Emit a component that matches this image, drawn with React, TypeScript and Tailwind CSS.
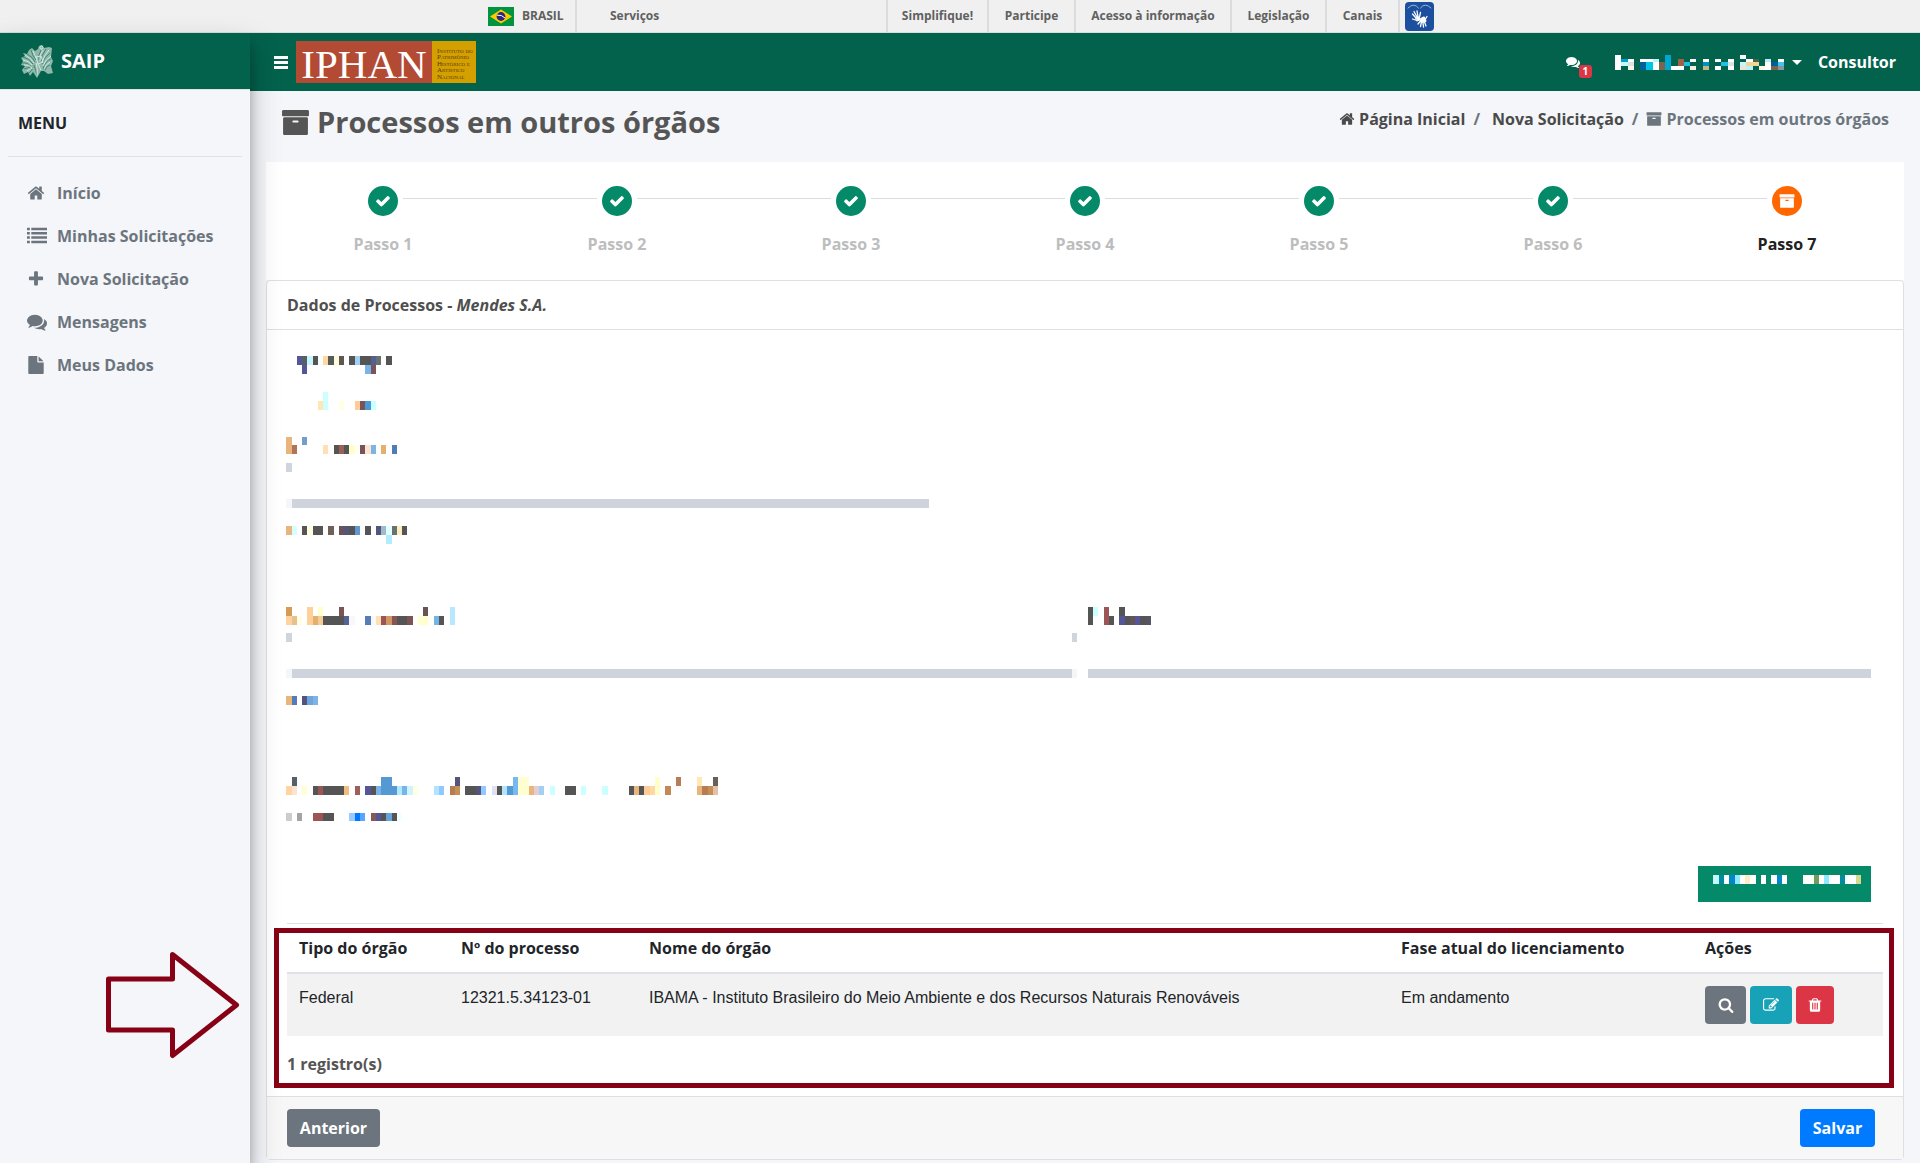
import type { ReactNode } from 'react';

const ICONS = {
  search:
    'M1216 832q0-185-131.5-316.5t-316.5-131.5-316.5 131.5-131.5 316.5 131.5 316.5 316.5 131.5 316.5-131.5 131.5-316.5zm512 832q0 52-38 90t-90 38q-54 0-90-38l-343-342q-179 124-399 124-143 0-273.5-55.5t-225-150-150-225-55.5-273.5 55.5-273.5 150-225 225-150 273.5-55.5 273.5 55.5 225 150 150 225 55.5 273.5q0 220-124 399l343 343q37 37 37 90z',
  home:
    'M1472 992v480q0 26-19 45t-45 19h-384v-384h-256v384h-384q-26 0-45-19t-19-45v-480q0-1 .5-3t.5-3l575-474 575 474q1 2 1 6zm223-69l-62 74q-8 9-21 11h-3q-13 0-21-7l-692-577-692 577q-12 8-24 7-13-2-21-11l-62-74q-8-10-7-23.5t11-21.5l719-599q32-26 76-26t76 26l244 204v-195q0-14 9-23t23-9h192q14 0 23 9t9 23v408l219 182q10 8 11 21.5t-7 23.5z',
  check:
    'M1671 566q0 40-28 68l-724 724-136 136q-28 28-68 28t-68-28l-136-136-362-362q-28-28-28-68t28-68l136-136q28-28 68-28t68 28l294 295 656-657q28-28 68-28t68 28l136 136q28 28 28 68z',
  plus:
    'M1600 736v192q0 40-28 68t-68 28h-416v416q0 40-28 68t-68 28h-192q-40 0-68-28t-28-68v-416h-416q-40 0-68-28t-28-68v-192q0-40 28-68t68-28h416v-416q0-40 28-68t68-28h192q40 0 68 28t28 68v416h416q40 0 68 28t28 68z',
  comments:
    'M1408 768q0 139-94 257t-256.5 186.5-353.5 68.5q-86 0-176-16-124 88-278 128-36 9-86 16h-3q-11 0-20.5-8t-11.5-21q-1-3-1-6.5t.5-6.5 2-6l2.5-5 3.5-5.5 4-5 4.5-5 4-4.5q5-6 23-25t26-29.5 22.5-29 25-38.5 20.5-44q-124-72-195-177t-71-224q0-139 94-257t256.5-186.5 353.5-68.5 353.5 68.5 256.5 186.5 94 257zm384 256q0 120-71 224.5t-195 176.5q10 24 20.5 44t25 38.5 22.5 29 26 29.5 23 25q1 1 4 4.5t4.5 5 4 5 3.5 5.5l2.5 5 2 6 .5 6.5-1 6.5q-3 14-13 22t-22 7q-50-7-86-16-154-40-278-128-90 16-176 16-271 0-472-132 58 4 88 4 161 0 309-45t264-129q125-92 192-212t67-254q0-77-23-152 129 71 204 178t75 230z',
  file:
    'M1152 512v-472q22 14 36 28l408 408q14 14 28 36h-472zm-128 32q0 40 28 68t68 28h544v1056q0 40-28 68t-68 28h-1344q-40 0-68-28t-28-68v-1600q0-40 28-68t68-28h800v544z',
  list:
    'M0 160h256v224h-256zM384 160h1408v224h-1408zM0 544h256v224h-256zM384 544h1408v224h-1408zM0 928h256v224h-256zM384 928h1408v224h-1408zM0 1312h256v224h-256zM384 1312h1408v224h-1408z',
  archive:
    'M1088 832q0-26-19-45t-45-19h-256q-26 0-45 19t-19 45 19 45 45 19h256q26 0 45-19t19-45zm576-192v960q0 26-19 45t-45 19h-1408q-26 0-45-19t-19-45v-960q0-26 19-45t45-19h1408q26 0 45 19t19 45zm64-448v256q0 26-19 45t-45 19h-1536q-26 0-45-19t-19-45v-256q0-26 19-45t45-19h1536q26 0 45 19t19 45z',
  trash:
    'M704 1376v-704q0-14-9-23t-23-9h-64q-14 0-23 9t-9 23v704q0 14 9 23t23 9h64q14 0 23-9t9-23zm256 0v-704q0-14-9-23t-23-9h-64q-14 0-23 9t-9 23v704q0 14 9 23t23 9h64q14 0 23-9t9-23zm256 0v-704q0-14-9-23t-23-9h-64q-14 0-23 9t-9 23v704q0 14 9 23t23 9h64q14 0 23-9t9-23zm-544-992h448l-48-117q-7-9-17-11h-317q-10 2-17 11zm928 32v64q0 14-9 23t-23 9h-96v948q0 83-47 143.5t-113 60.5h-832q-66 0-113-58.5t-47-141.5v-952h-96q-14 0-23-9t-9-23v-64q0-14 9-23t23-9h309l70-167q15-37 54-63t79-26h320q40 0 79 26t54 63l70 167h309q14 0 23 9t9 23z',
  edit:
    'M888 1184l116-116-152-152-116 116v56h96v96h56zm440-720q-16-16-33 1l-350 350q-17 17-1 33t33-1l350-350q17-17 1-33zm80 594v190q0 119-84.5 203.5t-203.5 84.5h-832q-119 0-203.5-84.5t-84.5-203.5v-832q0-119 84.5-203.5t203.5-84.5h832q63 0 117 25 15 7 18 23 3 17-9 29l-49 49q-14 14-32 8-23-6-45-6h-832q-66 0-113 47t-47 113v832q0 66 47 113t113 47h832q66 0 113-47t47-113v-126q0-13 9-22l64-64q15-15 35-7t20 29zm-96-738l288 288-672 672h-288v-288zm444 132l-92 92-288-288 92-92q28-28 68-28t68 28l152 152q28 28 28 68t-28 68z',
};

type IconName = keyof typeof ICONS;

function Icon({ name, className }: { name: IconName; className: string }) {
  return (
    <svg viewBox="0 0 1792 1792" fill="currentColor" aria-hidden="true" className={className}>
      <path d={ICONS[name]} />
    </svg>
  );
}

/* A strip of coloured blocks that hides private text. Units are thirds of a pixel. */
type Block = [x: number, y: number, w: number, h: number, fill: string];

function Mosaic({ box, blocks }: { box: [number, number, number, number]; blocks: Block[] }) {
  return (
    <svg
      viewBox={box.join(' ')}
      width={Math.round(box[2] / 3)}
      height={Math.round(box[3] / 3)}
      shapeRendering="crispEdges"
      aria-hidden="true"
      className="block shrink-0"
    >
      {blocks.map(([x, y, w, h, fill], i) => (
        <rect key={i} x={x} y={y} width={w} height={h} fill={fill} />
      ))}
    </svg>
  );
}

const D = '#555555';

const USER_NAME: Block[] = [
  [45, 75, 18, 45, '#fff'], [63, 87, 21, 9, '#00a0cc'], [63, 96, 21, 12, '#c4f6ff'], [84, 87, 18, 9, '#fff'], [84, 96, 18, 12, '#d6e4e4'], [84, 108, 18, 12, '#f8f4e8'],
  [120, 87, 39, 9, '#fff'], [120, 96, 18, 24, '#00609c'], [138, 96, 21, 24, '#00c4e4'], [159, 87, 18, 9, '#c0f0fa'], [159, 96, 18, 24, '#fff'], [177, 96, 18, 24, '#7a6450'],
  [195, 75, 18, 45, '#00a8d0'], [213, 108, 39, 12, '#fff'], [234, 87, 18, 21, '#a06048'], [252, 96, 18, 12, '#20c0e0'], [270, 87, 18, 9, '#fff'], [270, 108, 18, 12, '#f0f0e0'],
  [309, 87, 18, 9, '#fff'], [309, 96, 18, 12, '#0090c8'], [309, 108, 18, 12, '#c4b880'],
  [345, 87, 18, 9, '#fff'], [345, 108, 18, 12, '#fff'], [363, 96, 21, 12, '#20c0e0'], [384, 87, 18, 9, '#fff'], [384, 96, 18, 12, '#d6e4e4'], [384, 108, 18, 12, '#fff'],
  [420, 75, 18, 12, '#fff'], [438, 87, 21, 9, '#fff'], [459, 87, 18, 9, '#4c6444'], [420, 96, 18, 12, '#c4f6ff'], [438, 96, 39, 12, '#f0d498'], [420, 108, 18, 12, '#f0e4cc'], [438, 108, 21, 12, '#c0ecf4'],
  [477, 108, 18, 12, '#fff8e8'], [495, 87, 18, 9, '#c0e8fa'], [495, 96, 18, 24, '#fff'], [513, 96, 21, 12, '#00609c'], [513, 108, 21, 12, '#7a6450'], [534, 87, 18, 9, '#fff'], [534, 96, 18, 12, '#40c8e8'], [534, 108, 18, 12, '#8c94a0'],
];

const FIELD_A: Block[] = [
  [111, 48, 15, 27, '#555599'], [126, 48, 15, 27, '#556060'], [141, 48, 18, 27, '#c8f4ff'], [159, 48, 15, 27, D], [174, 48, 15, 27, '#f8ffff'], [189, 48, 15, 27, '#ffd8a0'], [204, 48, 18, 27, '#555c58'], [222, 48, 15, 27, '#fffcdc'], [237, 48, 15, 27, '#605850'],
  [267, 48, 18, 27, D], [285, 48, 15, 27, '#a0d0f4'], [300, 48, 33, 27, D], [333, 48, 15, 27, '#556090'], [348, 48, 15, 27, '#687070'], [378, 48, 18, 27, D],
  [126, 75, 15, 27, '#555599'], [315, 75, 18, 27, '#78b4ea'], [333, 75, 15, 27, '#7c5458'],
];
const FIELD_B: Block[] = [
  [189, 156, 15, 54, '#ccffff'], [174, 183, 15, 27, '#ffe6b4'], [237, 183, 15, 27, '#ffffe4'], [285, 183, 15, 27, '#ffcc98'], [300, 183, 15, 27, '#785458'], [315, 183, 18, 27, '#4c98d4'], [333, 183, 15, 27, '#ccffff'],
];
const FIELD_C: Block[] = [
  [78, 291, 18, 51, '#e8b67c'], [96, 315, 15, 27, '#b07458'], [126, 291, 15, 24, '#749ccc'], [189, 315, 15, 27, '#ffe0b4'], [222, 315, 15, 27, D], [237, 315, 15, 27, '#9c6058'], [252, 315, 15, 27, D], [267, 315, 18, 27, '#ffffcc'], [285, 315, 15, 27, '#fffff4'],
  [300, 315, 15, 27, '#785458'], [315, 315, 18, 27, '#fce4d0'], [333, 315, 15, 27, '#7cb4e8'], [363, 315, 15, 27, '#e4b070'], [396, 315, 15, 27, '#507cb8'],
];
const FIELD_E: Block[] = [
  [78, 558, 18, 27, '#e8b67c'], [96, 558, 15, 27, '#d8ffff'], [126, 558, 15, 27, D], [141, 558, 18, 27, '#ffffe4'], [159, 558, 30, 27, D], [204, 558, 18, 27, '#706058'], [237, 558, 15, 27, '#685458'], [252, 558, 15, 27, '#55557c'], [267, 558, 18, 27, D], [285, 558, 15, 27, '#6098d4'],
  [315, 558, 18, 27, D], [348, 558, 15, 27, '#55557c'], [363, 558, 15, 27, '#9cbccc'], [378, 558, 18, 27, '#e4ffff'], [396, 558, 15, 27, '#687070'], [411, 558, 15, 27, '#ffecc0'], [426, 558, 15, 27, D], [378, 585, 18, 27, '#b4ecff'],
];
const FIELD_F: Block[] = [
  [78, 51, 18, 27, '#d49c54'], [78, 78, 18, 27, '#ffd4a0'], [96, 78, 15, 27, '#e8c090'], [111, 78, 15, 27, '#ffffe4'], [141, 51, 18, 54, '#ffd098'], [174, 51, 15, 27, '#ffffcc'], [159, 78, 15, 27, '#e4b070'], [174, 78, 15, 27, '#f4cc94'], [189, 78, 63, 27, D], [237, 51, 15, 27, '#7c5458'], [252, 78, 15, 27, '#556498'], [267, 78, 18, 27, '#f8f8fc'],
  [315, 78, 18, 27, '#587cb8'], [333, 78, 15, 27, '#f8f8ff'], [348, 78, 15, 27, '#ffe0b0'], [363, 78, 15, 27, '#9c5458'], [378, 78, 18, 27, '#d09860'], [396, 78, 15, 27, '#885458'], [411, 78, 30, 27, D], [441, 78, 18, 27, '#7c5458'], [474, 78, 30, 27, '#ffffd0'], [489, 51, 15, 27, '#685454'], [504, 78, 18, 27, '#fffff8'], [522, 78, 15, 27, '#70b4e8'], [537, 78, 15, 27, D], [570, 51, 15, 54, '#b8e8ff'],
];
const FIELD_F2: Block[] = [
  [141, 51, 15, 54, D], [156, 51, 15, 27, '#ccffff'], [189, 51, 15, 54, '#9c5454'], [204, 78, 15, 27, D], [234, 51, 18, 27, D], [234, 78, 18, 27, '#555599'], [252, 78, 15, 27, D], [267, 78, 15, 27, '#645454'], [282, 78, 15, 27, '#555599'], [297, 78, 18, 27, D], [315, 78, 15, 27, '#555564'],
];
const FIELD_G: Block[] = [
  [78, 318, 18, 27, '#e8b67c'], [96, 318, 15, 27, '#547ab8'], [126, 318, 15, 27, '#55557c'], [141, 318, 18, 27, '#70a4dc'], [159, 318, 15, 27, '#7cb4e8'],
];
const FIELD_H: Block[] = [
  [96, 561, 15, 27, '#556068'], [78, 588, 18, 27, '#ffd4a0'], [96, 588, 15, 27, '#fce4d0'], [126, 588, 15, 27, '#ffffd4'], [159, 588, 15, 27, D], [174, 588, 15, 27, '#9c5454'], [189, 588, 63, 27, D], [252, 588, 15, 27, '#f0bc80'], [285, 588, 15, 27, '#9c6058'], [315, 588, 18, 27, '#555599'], [333, 588, 15, 27, D], [348, 588, 15, 27, '#78b4e8'],
  [363, 561, 33, 54, '#5499d4'], [396, 588, 15, 27, '#5499d4'], [411, 588, 15, 27, '#b4e8ff'], [426, 588, 15, 27, '#78b4e8'], [441, 588, 18, 27, '#d0f4ff'], [459, 588, 15, 27, '#ffffe4'], [522, 588, 15, 27, '#b0e4ff'], [537, 588, 15, 27, '#90c8ff'], [570, 588, 15, 27, '#b87c54'], [585, 561, 15, 27, '#55557c'], [585, 588, 15, 27, '#c49058'],
  [615, 588, 33, 27, D], [648, 588, 15, 27, '#55557c'], [663, 588, 15, 27, '#90c8ff'], [696, 588, 15, 27, '#e0e0f4'], [711, 588, 15, 27, D], [726, 588, 15, 27, '#b0e4ff'], [741, 588, 18, 27, '#5499d4'], [759, 561, 15, 54, '#78b8f0'], [774, 561, 33, 54, '#ffffd0'], [807, 588, 15, 27, '#e8b67c'], [822, 588, 15, 27, '#e4ccd0'], [837, 588, 15, 27, '#a0d0f4'], [870, 588, 15, 27, '#ccffff'],
  [915, 588, 33, 27, D], [963, 588, 15, 27, '#ccffff'], [1026, 588, 18, 27, '#ccffff'], [1107, 588, 15, 27, D], [1122, 588, 15, 27, '#e8b67c'], [1137, 588, 15, 27, D], [1152, 588, 18, 27, '#ffcc98'], [1170, 588, 15, 27, '#ffd8a4'], [1185, 561, 15, 54, '#ffffcc'], [1215, 588, 18, 27, '#c48854'], [1248, 561, 15, 27, '#b87c58'],
  [1311, 561, 15, 27, '#ffe8b4'], [1311, 588, 15, 27, '#e8b67c'], [1326, 588, 18, 27, '#b87c54'], [1344, 588, 15, 27, '#c49058'], [1359, 561, 15, 27, '#686058'], [1359, 588, 15, 27, '#e4c0a8'],
];
const FIELD_I: Block[] = [
  [78, 669, 18, 24, '#cccccc'], [111, 669, 15, 24, '#a4a4a4'], [159, 669, 30, 24, '#9c5454'], [189, 669, 33, 24, D], [267, 669, 18, 24, '#98ccff'], [285, 669, 15, 24, '#0078ff'], [300, 669, 15, 24, '#58a4ff'],
  [333, 669, 15, 24, '#885858'], [348, 669, 15, 24, '#555599'], [363, 669, 15, 24, D], [378, 669, 18, 24, '#64a4dc'], [396, 669, 15, 24, D], [411, 669, 15, 24, '#f0ffff'],
];
const ADD_LABEL: Block[] = [
  [459, 105, 18, 27, '#c4f8ff'], [477, 105, 15, 27, '#008ca0'], [492, 105, 15, 27, '#fff'], [507, 105, 18, 27, '#0088c8'], [525, 105, 15, 27, '#90e8ff'], [540, 105, 15, 27, '#fff'], [555, 105, 15, 27, '#ffecc4'], [570, 105, 18, 27, '#fff'], [603, 105, 15, 27, '#fff'], [633, 105, 18, 27, '#fff'], [651, 105, 15, 27, '#0088c8'], [666, 105, 15, 27, '#fff'],
  [729, 105, 33, 27, '#fffffa'], [762, 105, 15, 27, '#709c60'], [777, 105, 15, 27, '#fff'], [792, 105, 15, 27, '#90e8ff'], [807, 105, 33, 27, '#fff'], [840, 105, 15, 27, '#008ca0'], [855, 105, 33, 27, '#fff'], [888, 105, 15, 27, '#d4d890'],
];

function GovLink({ className, children }: { className: string; children: ReactNode }) {
  return (
    <a href="#" className={`flex h-full items-center justify-center ${className}`}>
      {children}
    </a>
  );
}

function GovBar() {
  return (
    <div className="h-[33px] border-b border-[#dcdcdc] bg-[#f0f0f0] text-xs font-bold text-[#606060]">
      <div className="mx-auto flex h-8 w-[948px] max-w-full items-center pl-[2px]">
        <a href="#" className="flex h-full w-[89px] shrink-0 items-center gap-2 border-r-2 border-[#dcdcdc]">
          <svg viewBox="0 0 26 19" className="h-[19px] w-[26px]" aria-hidden="true">
            <rect width="26" height="19" fill="#009440" />
            <path d="M13 2.5 24 9.5 13 16.5 2 9.5z" fill="#ffcb00" />
            <circle cx="13" cy="9.5" r="4.4" fill="#302681" />
            <path d="M9 8.2q4.500-.8 8 2.800" stroke="#fff" strokeWidth="1" fill="none" />
          </svg>
          BRASIL
        </a>
        <GovLink className="ml-[33px]">Serviços</GovLink>
        <nav className="ml-auto flex h-full">
          <GovLink className="w-[101px] border-l-2 border-[#dcdcdc]">Simplifique!</GovLink>
          <GovLink className="w-[87px] border-l-2 border-[#dcdcdc]">Participe</GovLink>
          <GovLink className="w-[156px] border-l-2 border-[#dcdcdc]">Acesso à informação</GovLink>
          <GovLink className="w-[95px] border-l-2 border-[#dcdcdc]">Legislação</GovLink>
          <GovLink className="w-[75px] border-x-2 border-[#dcdcdc]">Canais</GovLink>
        </nav>
        <button type="button" aria-label="VLibras" className="ml-[5px] h-[29px] w-[29px] shrink-0 rounded bg-[#1c4f9e]">
          <svg viewBox="0 0 29 29" className="h-[29px] w-[29px]" fill="none" stroke="#fff" strokeLinecap="round" strokeLinejoin="round" aria-hidden="true">
            <path d="M3 6Q9 0 13.500 6M15.500 6Q20 0 26 6" stroke="#9fb6da" strokeWidth="1" />
            <path d="M11 16 7.500 12M12 15 9 9.500M13 14.500 12 9M14.500 15 15.500 10.500M10.500 18 7.500 17" strokeWidth="1.300" />
            <path d="M11 16 14 15 15 18 12 19z" fill="#fff" strokeWidth="1" />
            <path d="M16 17 19 15.500 20.500 19 16.500 20z" fill="#fff" strokeWidth="2" />
            <path d="M15.500 19 13 22M16.500 20 15.500 24.500M18 20.500 18.500 25M19.500 20 21 24M20.500 17 22 14.500" strokeWidth="1.300" />
          </svg>
        </button>
      </div>
    </div>
  );
}

const MENU: { icon: IconName; label: string }[] = [
  { icon: 'home', label: 'Início' },
  { icon: 'list', label: 'Minhas Solicitações' },
  { icon: 'plus', label: 'Nova Solicitação' },
  { icon: 'comments', label: 'Mensagens' },
  { icon: 'file', label: 'Meus Dados' },
];

function Emblem() {
  return (
    <svg viewBox="0 0 32 33" className="h-[33px] w-8" aria-hidden="true">
      <path
        d="M8 5 11 3 14 6 17 4 18 1 21 0 23 3 28 2 31 3 30 12 32 16 30 21 32 28 27 29 23 26 20 26 16 33 12 27 9 31 7 27 3 29 1 25 4 21 0 20 2 16 0 13 4 11 2 8 6 9z"
        fill="#8db8aa"
      />
      <g fill="none" stroke="#2c7a66" strokeWidth="0.800">
        <path d="M2 12q6 1 10 7M1 18q6-1 9 4M3 24q5-3 9 0M6 9q6 3 8 8M10 5q2 7 5 10M20 5q-3 5-2 10M25 4q-5 7-5 12M29 8q-6 4-8 11M30 14q-6 2-8 10M29 20q-4 1-5 5M13 20q2 5 3 11M8 28q3-2 4-6" />
      </g>
      <g fill="none" stroke="#dcebe6" strokeWidth="0.900">
        <path d="M4 10q6 3 9 8M2 15q6 1 9 5M3 20q5-1 8 3M12 6q2 5 4 8M22 5q-4 5-3 11M28 5q-5 5-7 13M30 11q-5 3-8 10M29 17q-4 2-6 7M15 18q2 6 1 13M6 26q4-3 6-3" />
        <circle cx="20.500" cy="2.500" r="1.500" />
        <path d="m15 12 5-1 2 6-5 2zM17 19l3 6" />
      </g>
    </svg>
  );
}

function Sidebar() {
  return (
    <aside className="z-10 flex w-[250px] shrink-0 flex-col bg-[#f4f6fa] shadow-[0_14px_28px_rgba(0,0,0,0.25),0_10px_10px_rgba(0,0,0,0.22)]">
      <a href="#" className="flex h-[57px] items-center gap-2 border-b border-[#dee2e6] bg-[#03624c] pl-[21px] text-xl font-bold text-white">
        <Emblem />
        SAIP
      </a>
      <div className="mx-2 flex h-[67px] items-center border-b border-[#dee2e6] pl-[10px] text-base font-bold text-[#212529]">
        MENU
      </div>
      <nav className="mt-[14px] flex flex-col">
        {MENU.map(({ icon, label }) => (
          <a key={label} href="#" className="flex h-[43px] items-center gap-2 pl-[27px] text-base font-bold text-[#6c757d]">
            <span className="flex w-[22px] justify-start">
              <Icon name={icon} className={icon === 'list' || icon === 'comments' ? 'h-5 w-5' : 'h-[18px] w-[18px]'} />
            </span>
            {label}
          </a>
        ))}
      </nav>
    </aside>
  );
}

function Navbar() {
  return (
    <header className="flex h-[58px] items-center bg-[#03624c] pr-6 pl-6 text-base font-bold text-white">
      <button type="button" aria-label="Alternar menu" className="flex w-[14px] flex-col gap-[2px]">
        <span className="h-[3px] bg-white" />
        <span className="h-[3px] bg-white" />
        <span className="h-[3px] bg-white" />
      </button>
      <svg viewBox="0 0 180 42" className="ml-2 h-[42px] w-[180px] overflow-visible" role="img" aria-label="IPHAN">
        <rect width="136" height="42" fill="#b34a33" />
        <rect x="136" width="44" height="42" fill="#d4a000" />
        <text x="68" y="37" textAnchor="middle" fontSize="41" fontWeight="400" fill="#fff" fontFamily="'Liberation Serif', serif">IPHAN</text>
        <g fontSize="7" fontWeight="400" fill="#5a3a10" fontFamily="'Liberation Serif', serif" style={{ fontVariant: 'small-caps' }}>
          <text x="141" y="12">Instituto do</text>
          <text x="141" y="18">Patrimônio</text>
          <text x="141" y="25">Histórico e</text>
          <text x="141" y="31">Artístico</text>
          <text x="141" y="38">Nacional</text>
        </g>
      </svg>
      <div className="ml-auto flex items-center">
        <a href="#" aria-label="Mensagens: 1" className="relative mr-[35px]">
          <Icon name="comments" className="h-[14px] w-[14px]" />
          <span className="absolute top-[10px] left-[13px] flex h-[13px] w-[13px] items-center justify-center rounded-[3px] bg-[#dc3545] text-[10px]">1</span>
        </a>
        <button type="button" aria-label="Conta do usuário" className="flex items-center gap-2">
          <Mosaic box={[45, 75, 507, 45]} blocks={USER_NAME} />
          <span className="border-x-[5px] border-t-[5px] border-x-transparent border-t-white" />
        </button>
        <span className="ml-4">Consultor</span>
      </div>
    </header>
  );
}

function TitleBar() {
  return (
    <div className="flex h-[71px] items-start justify-between px-[15px]">
      <h1 className="mt-[10px] flex items-center gap-[7px] text-[29px] leading-[42px] font-bold text-[#555]">
        <Icon name="archive" className="h-[29px] w-[29px]" />
        Processos em outros órgãos
      </h1>
      <nav aria-label="Trilha" className="mt-4 flex items-center text-base font-bold text-[#6c757d]">
        <a href="#" className="flex items-center gap-1 text-[#4a4a4a]">
          <Icon name="home" className="h-4 w-4" />
          Página Inicial
        </a>
        <span className="ml-2">/</span>
        <a href="#" className="ml-3 text-[#4a4a4a]">Nova Solicitação</a>
        <span className="mx-2">/</span>
        <span className="flex items-center gap-1">
          <Icon name="archive" className="h-4 w-4" />
          Processos em outros órgãos
        </span>
      </nav>
    </div>
  );
}

const STEPS = [1, 2, 3, 4, 5, 6, 7];

function Stepper() {
  return (
    <ol className="flex h-[118px] bg-white pt-6 text-base font-bold">
      {STEPS.map((n) => {
        const active = n === 7;
        return (
          <li key={n} className="flex flex-1 flex-col">
            <div className="flex items-center gap-[5px]">
              <span className={`mb-[5px] h-px flex-1 ${n === 1 ? '' : 'bg-[#dcdcdc]'}`} />
              <span className={`flex h-[30px] w-[30px] items-center justify-center rounded-full text-white ${active ? 'bg-[#ff6600]' : 'bg-[#048a68]'}`}>
                <Icon name={active ? 'archive' : 'check'} className="h-4 w-4" />
              </span>
              <span className={`mb-[5px] h-px flex-1 ${active ? '' : 'bg-[#dcdcdc]'}`} />
            </div>
            <span className={`mt-4 text-center ${active ? 'text-[#212121]' : 'text-[#bdbdbd]'}`}>Passo {n}</span>
          </li>
        );
      })}
    </ol>
  );
}

/* Concealed form: every field is reduced to blocks and the tinted edge of its input. */
function ConcealedForm() {
  return (
    <section aria-label="Formulário" className="flex flex-col pt-[26px] pr-8 pl-[19px]">
      <div className="pl-[11px]">
        <Mosaic box={[111, 48, 285, 54]} blocks={FIELD_A} />
      </div>
      <div className="mt-[18px] pl-8">
        <Mosaic box={[174, 156, 174, 54]} blocks={FIELD_B} />
      </div>
      <div className="mt-[27px]">
        <Mosaic box={[78, 291, 333, 51]} blocks={FIELD_C} />
      </div>
      <div className="mt-[9px] h-[9px] w-[6px] bg-[#d0d4dc]" />
      <div className="mt-[27px] h-[9px] w-[643px] max-w-full border-l-[6px] border-[#f4f6f9] bg-[#cfd3dc]" />
      <div className="mt-[18px]">
        <Mosaic box={[78, 558, 363, 54]} blocks={FIELD_E} />
      </div>
      <div className="mt-[63px] grid grid-cols-[100fr_99fr] gap-[11px]">
        <div>
          <Mosaic box={[78, 51, 507, 54]} blocks={FIELD_F} />
          <div className="mt-2 flex h-[9px] justify-between">
            <span className="w-[6px] bg-[#d0d4dc]" />
            <span className="w-[5px] bg-[#d0d4dc]" />
          </div>
          <div className="mt-[27px] h-[9px] border-r-[5px] border-l-[6px] border-[#f4f6f9] bg-[#cfd3dc]" />
        </div>
        <div>
          <Mosaic box={[141, 51, 189, 54]} blocks={FIELD_F2} />
          <div className="mt-11 h-[9px] bg-[#cfd3dc]" />
        </div>
      </div>
      <div className="mt-[18px]">
        <Mosaic box={[78, 318, 96, 27]} blocks={FIELD_G} />
      </div>
      <div className="mt-[72px]">
        <Mosaic box={[78, 561, 1296, 54]} blocks={FIELD_H} />
      </div>
      <div className="mt-[18px]">
        <Mosaic box={[78, 669, 348, 24]} blocks={FIELD_I} />
      </div>
      <button type="button" aria-label="Adicionar processo" className="mt-[45px] flex h-9 w-[173px] items-start self-end bg-[#048a68] pt-[9px] pl-[15px]">
        <Mosaic box={[459, 105, 444, 27]} blocks={ADD_LABEL} />
      </button>
    </section>
  );
}

function ProcessTable() {
  return (
    <div className="relative mx-5 mt-[21px]">
      <table className="w-full table-fixed border-t border-[#dee2e6] text-left text-base text-[#212529]">
        <colgroup>
          <col className="w-[162px]" />
          <col className="w-[188px]" />
          <col />
          <col className="w-[304px]" />
          <col className="w-[190px]" />
        </colgroup>
        <thead>
          <tr className="h-[49px] border-b-2 border-[#dee2e6]">
            <th className="px-3 font-bold">Tipo do órgão</th>
            <th className="px-3 font-bold">Nº do processo</th>
            <th className="px-3 font-bold">Nome do órgão</th>
            <th className="px-3 font-bold">Fase atual do licenciamento</th>
            <th className="px-3 font-bold">Ações</th>
          </tr>
        </thead>
        <tbody>
          <tr className="h-[63px] bg-[#f2f2f2] align-top font-['Liberation_Sans',Arial,sans-serif]">
            <td className="px-3 pt-3">Federal</td>
            <td className="px-3 pt-3">12321.5.34123-01</td>
            <td className="px-3 pt-3">IBAMA - Instituto Brasileiro do Meio Ambiente e dos Recursos Naturais Renováveis</td>
            <td className="px-3 pt-3">Em andamento</td>
            <td className="px-3 pt-3">
              <div className="flex gap-1 text-white">
                <button type="button" aria-label="Visualizar" className="flex h-[38px] w-[41px] items-center justify-center rounded bg-[#6c757d]">
                  <Icon name="search" className="h-4 w-4" />
                </button>
                <button type="button" aria-label="Editar" className="flex h-[38px] w-[42px] items-center justify-center rounded bg-[#17a2b8]">
                  <Icon name="edit" className="h-4 w-4" />
                </button>
                <button type="button" aria-label="Excluir" className="flex h-[38px] w-[38px] items-center justify-center rounded bg-[#dc3545]">
                  <Icon name="trash" className="h-4 w-4" />
                </button>
              </div>
            </td>
          </tr>
        </tbody>
      </table>
      <p className="mt-4 mb-5 text-base font-bold text-[#555]">1 registro(s)</p>

      <div className="pointer-events-none absolute top-[5px] -right-[11px] -bottom-[12px] -left-[13px] border-[5px] border-[#880015]" />
      <svg viewBox="0 0 134 108" className="pointer-events-none absolute top-[28px] right-full z-20 mr-[47px] h-[108px] w-[134px]" aria-hidden="true">
        <path d="M2.500 28H66.500V3.500L130.500 54 66.500 104.500V79H2.500z" fill="none" stroke="#880015" strokeWidth="5" strokeLinejoin="round" />
      </svg>
    </div>
  );
}

export default function App() {
  return (
    <div className="flex min-h-screen flex-col bg-[#f4f6fa] font-['Open_Sans',sans-serif]">
      <GovBar />
      <div className="flex flex-1">
        <Sidebar />
        <div className="flex min-w-0 flex-1 flex-col">
          <Navbar />
          <main className="px-4 pb-1">
            <TitleBar />
            <Stepper />
            <section className="rounded border border-[#dfdfdf] bg-white">
              <h2 className="flex h-[49px] items-center border-b border-[#dfdfdf] px-5 text-base font-bold whitespace-pre text-[#4f4f4f]">
                Dados de Processos - <em>Mendes S.A.</em>
              </h2>
              <ConcealedForm />
              <ProcessTable />
              <footer className="flex items-center justify-between border-t border-[#dfdfdf] bg-[#f7f7f7] py-3 pr-7 pl-5 text-base font-bold text-white">
                <button type="button" className="h-[38px] w-[93px] rounded bg-[#6c757d]">Anterior</button>
                <button type="button" className="h-[38px] w-[75px] rounded bg-[#007bff]">Salvar</button>
              </footer>
            </section>
          </main>
        </div>
      </div>
    </div>
  );
}
